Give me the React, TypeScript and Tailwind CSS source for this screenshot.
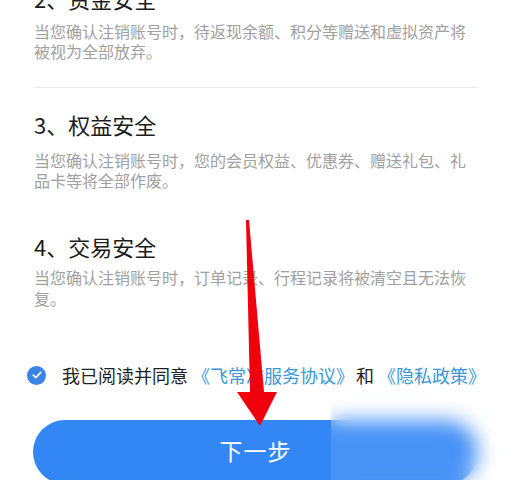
import React from "react";

const font = { fontFamily: '"Noto Sans CJK SC", "Noto Sans", sans-serif' };

export default function App() {
  return (
    <div
      className="relative w-[519px] h-[480px] overflow-hidden bg-white"
      style={font}
    >
      <div className="flex flex-col pl-[34px] w-[478px] -mt-[17px]">
        {/* Section 2 */}
        <div className="text-[22px] leading-[30px] text-[#1c1c1c]">2、资金安全</div>
        <div className="mt-[8px] text-[16px] leading-[20px] text-[#a0a0a0]">
          当您确认注销账号时，待返现余额、积分等赠送和虚拟资产将被视为全部放弃。
        </div>
        <div className="mt-[26px] h-px bg-[#ececec]" />

        {/* Section 3 */}
        <div className="mt-[21px] text-[22px] leading-[30px] text-[#1c1c1c]">3、权益安全</div>
        <div className="mt-[11px] text-[16px] leading-[20px] text-[#a0a0a0]">
          当您确认注销账号时，您的会员权益、优惠券、赠送礼包、礼品卡等将全部作废。
        </div>

        {/* Section 4 */}
        <div className="mt-[41px] text-[22px] leading-[30px] text-[#1c1c1c]">4、交易安全</div>
        <div className="mt-[6px] text-[16px] leading-[21px] text-[#a0a0a0]">
          当您确认注销账号时，订单记录、行程记录将被清空且无法恢复。
        </div>
      </div>

      {/* Agreement row */}
      <div className="mt-[51px] flex items-center h-[30px] pl-[27px]">
        <div className="w-[19px] h-[19px] rounded-full bg-[#3a84e6] flex items-center justify-center shrink-0">
          <svg width="10" height="8" viewBox="0 0 10 8">
            <path d="M1.2 4.2 L3.8 6.6 L8.8 1.4" fill="none" stroke="white" strokeWidth="1.6" strokeLinecap="round" strokeLinejoin="round" />
          </svg>
        </div>
        <div className="ml-[16px] text-[18px] leading-[30px] whitespace-nowrap text-[#222] flex items-center">
          <span>我已阅读并同意</span>
          <span className="ml-[4px] text-[#3b97d6]">《飞常准服务协议》</span>
          <span className="ml-[2px]">和</span>
          <span className="ml-[4px] text-[#3b97d6]">《隐私政策》</span>
        </div>
      </div>

      {/* Button */}
      <div className="mt-[30px] ml-[33px] w-[445px] h-[64px] rounded-full bg-[#3387f5] flex items-start justify-center pt-[14px]">
        <span className="text-[23px] leading-[32px] text-white tracking-[1px]">下一步</span>
      </div>

      {/* Red arrow overlay */}
      <svg
        className="absolute left-0 top-0 pointer-events-none"
        width="519"
        height="480"
        viewBox="0 0 519 480"
      >
        <polygon
          points="246,220 249,220 264,392 277,392 260,426 237,392 250,392"
          fill="#f0000c"
        />
      </svg>

      {/* Blurred patch overlay */}
      <div className="absolute left-[331px] top-[397px] w-[188px] h-[83px] backdrop-blur-[10px] bg-white/10" />
    </div>
  );
}
